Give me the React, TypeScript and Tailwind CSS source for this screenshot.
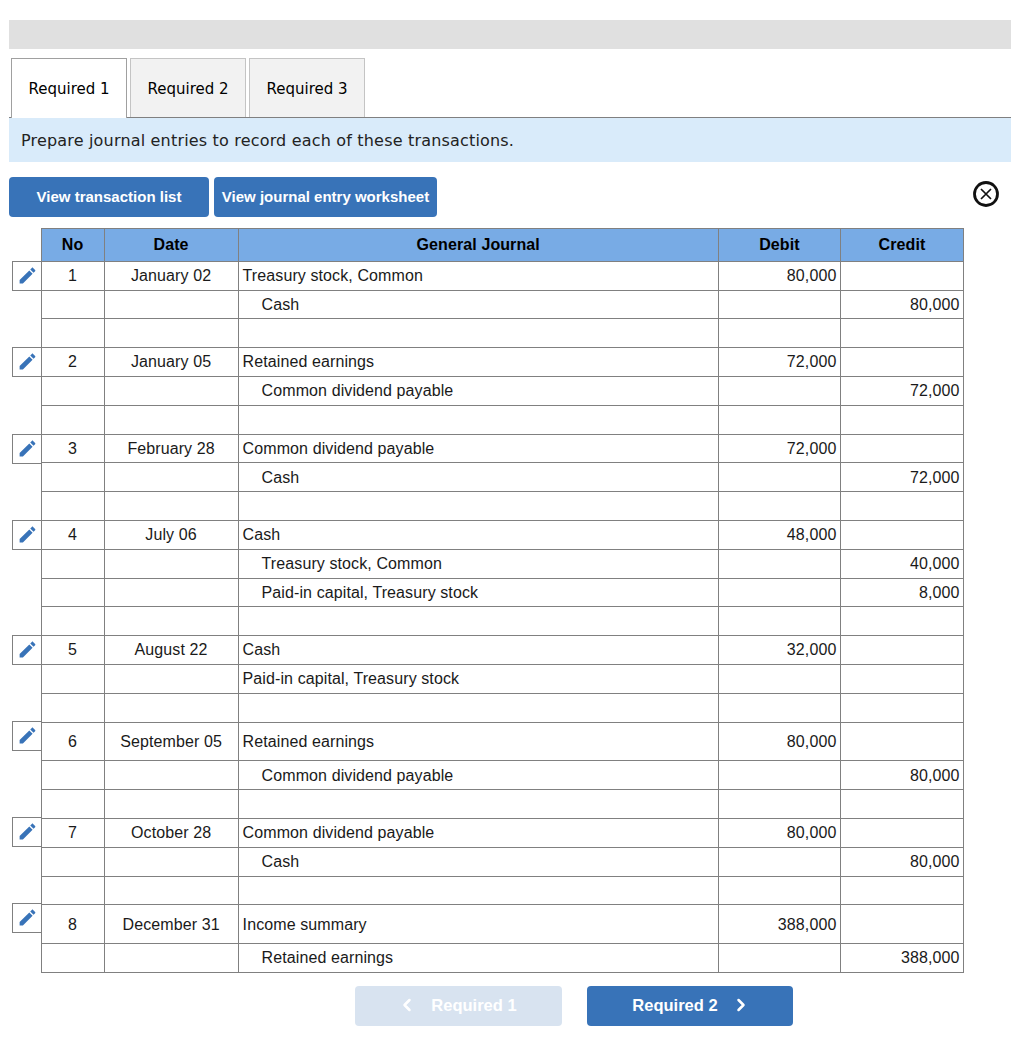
import { ChevronLeft, ChevronRight } from 'lucide-react';

type Row = { h: string; no?: string; date?: string; acct?: string; indent?: boolean; debit?: string; credit?: string; pencil?: string; nudge?: boolean };

const rows: Row[] = [
  { h: 'h-[29px]', no: '1', date: 'January 02', acct: 'Treasury stock, Common', debit: '80,000', pencil: '-top-px' },
  { h: 'h-[28px]', acct: 'Cash', indent: true, credit: '80,000' },
  { h: 'h-[29px]' },
  { h: 'h-[29px]', no: '2', date: 'January 05', acct: 'Retained earnings', debit: '72,000', pencil: '-top-px' },
  { h: 'h-[29px]', acct: 'Common dividend payable', indent: true, credit: '72,000' },
  { h: 'h-[29px]' },
  { h: 'h-[28px]', no: '3', date: 'February 28', acct: 'Common dividend payable', debit: '72,000', pencil: '-top-px' },
  { h: 'h-[29px]', acct: 'Cash', indent: true, credit: '72,000', nudge: true },
  { h: 'h-[29px]' },
  { h: 'h-[29px]', no: '4', date: 'July 06', acct: 'Cash', debit: '48,000', pencil: '-top-px' },
  { h: 'h-[29px]', acct: 'Treasury stock, Common', indent: true, credit: '40,000' },
  { h: 'h-[28px]', acct: 'Paid-in capital, Treasury stock', indent: true, credit: '8,000' },
  { h: 'h-[29px]' },
  { h: 'h-[29px]', no: '5', date: 'August 22', acct: 'Cash', debit: '32,000', pencil: '-top-px' },
  { h: 'h-[29px]', acct: 'Paid-in capital, Treasury stock' },
  { h: 'h-[29px]' },
  { h: 'h-[38px]', no: '6', date: 'September 05', acct: 'Retained earnings', debit: '80,000', pencil: '-top-[2px]' },
  { h: 'h-[29px]', acct: 'Common dividend payable', indent: true, credit: '80,000', nudge: true },
  { h: 'h-[29px]' },
  { h: 'h-[29px]', no: '7', date: 'October 28', acct: 'Common dividend payable', debit: '80,000', pencil: '-top-[2px]' },
  { h: 'h-[29px]', acct: 'Cash', indent: true, credit: '80,000' },
  { h: 'h-[28px]' },
  { h: 'h-[39px]', no: '8', date: 'December 31', acct: 'Income summary', debit: '388,000', pencil: '-top-[2px]', nudge: true },
  { h: 'h-[29px]', acct: 'Retained earnings', indent: true, credit: '388,000' },
];

function Pencil() {
  return (
    <svg viewBox="0 0 24 24" className="w-[21px] h-[21px] fill-[#3873b8]">
      <path d="M3 17.25V21h3.75L17.81 9.94l-3.75-3.75L3 17.25zM20.71 7.04c.39-.39.39-1.02 0-1.41l-2.34-2.34c-.39-.39-1.02-.39-1.41 0l-1.83 1.83 3.75 3.75 1.83-1.83z" />
    </svg>
  );
}

function Tab({ label, active }: { label: string; active?: boolean }) {
  return (
    <div
      className={
        active
          ? 'w-[116px] h-[60px] pt-[2px] flex items-center justify-center bg-white border border-b-0 border-[#a0a0a0] text-black'
          : 'w-[116px] h-[59px] pt-[3px] flex items-center justify-center bg-[#f2f2f2] border border-b-0 border-[#c4c4c4] text-black'
      }
    >
      {label}
    </div>
  );
}

export default function App() {
  return (
    <div className="w-[1011px] h-[1039px] bg-white pl-[9px] pt-5 font-['Liberation_Sans',Arial,sans-serif] text-[16px] tracking-[0.1px] text-[#1a1a1a]">
      <div className="h-[29px] bg-[#e0e0e0]"></div>

      {/* Tabs */}
      <div className="mt-[9px] h-[60px] flex items-start gap-[3px] pl-[2px] border-b border-[#808080] font-['DejaVu_Sans',Verdana,sans-serif] text-[15px] tracking-normal">
        <Tab label="Required 1" active />
        <Tab label="Required 2" />
        <Tab label="Required 3" />
      </div>
      <div className="h-[44px] bg-[#d9ebfa] pl-3 pt-px flex items-center font-['DejaVu_Sans',Verdana,sans-serif] text-[16px] tracking-[0.18px] text-[#222]">
        Prepare journal entries to record each of these transactions.
      </div>

      {/* Action buttons */}
      <div className="mt-[15px] flex items-start gap-[5px]">
        <button className="w-[200px] h-10 pt-px rounded bg-[#3873b8] text-white text-[15px] tracking-normal font-bold">View transaction list</button>
        <button className="w-[223px] h-10 pt-px rounded bg-[#3873b8] text-white text-[15px] tracking-normal font-bold">View journal entry worksheet</button>
        <svg viewBox="0 0 26 26" className="ml-auto mr-[12px] mt-[4px] w-[26px] h-[26px] fill-none stroke-[#111]">
          <circle cx="13" cy="13" r="11.5" strokeWidth="2.8" />
          <path d="M8 8l10 10M18 8L8 18" strokeWidth="1.7" />
        </svg>
      </div>

      {/* Journal table */}
      <table className="mt-[11px] ml-[3px] w-[952px] table-fixed border-collapse">
        <colgroup>
          <col className="w-[29px]" />
          <col className="w-[63px]" />
          <col className="w-[134px]" />
          <col className="w-[480px]" />
          <col className="w-[122px]" />
          <col className="w-[123px]" />
        </colgroup>
        <thead>
          <tr className="h-[33px] font-bold text-black">
            <th className="p-0"></th>
            <th className="p-0 border border-[#808080] bg-[#78abe5]">No</th>
            <th className="p-0 border border-[#808080] bg-[#78abe5]">Date</th>
            <th className="p-0 border border-[#808080] bg-[#78abe5]">General Journal</th>
            <th className="p-0 border border-[#808080] bg-[#78abe5]">Debit</th>
            <th className="p-0 border border-[#808080] bg-[#78abe5]">Credit</th>
          </tr>
        </thead>
        <tbody>
          {rows.map((r, i) => {
            const top = r.nudge ? 'pt-[2px]' : 'pt-0';
            return (
              <tr key={i} className={r.h}>
                <td className="p-0 relative">
                  {r.pencil && (
                    <div className={`absolute left-0 ${r.pencil} w-[30px] h-[30px] border border-[#808080] flex items-center justify-center`}>
                      <Pencil />
                    </div>
                  )}
                </td>
                <td className={`${top} border border-[#808080] text-center`}>{r.no}</td>
                <td className={`${top} border border-[#808080] text-center`}>{r.date}</td>
                <td className={`${top} ${r.indent ? 'pl-[23px]' : 'pl-1'} border border-[#808080]`}>{r.acct}</td>
                <td className={`${top} pr-[3.5px] border border-[#808080] text-right`}>{r.debit}</td>
                <td className={`${top} pr-[3.5px] border border-[#808080] text-right`}>{r.credit}</td>
              </tr>
            );
          })}
        </tbody>
      </table>

      {/* Prev / next */}
      <div className="mt-[13px] pl-[346px] flex items-start gap-[25px] text-[16.5px] tracking-normal">
        <button className="w-[207px] h-10 pr-[3px] pb-[2px] rounded-sm bg-[#d8e3f0] text-white font-bold flex items-center justify-center gap-[14px]">
          <ChevronLeft className="w-5 h-5" strokeWidth={3} />
          Required 1
        </button>
        <button className="w-[206px] h-10 pl-[3px] pb-[2px] rounded-sm bg-[#3873b8] text-white font-bold flex items-center justify-center gap-[13px]">
          Required 2
          <ChevronRight className="w-5 h-5" strokeWidth={3} />
        </button>
      </div>
    </div>
  );
}
